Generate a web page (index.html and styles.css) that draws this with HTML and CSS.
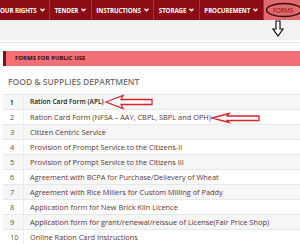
FILE: index.html
```html
<!DOCTYPE html>
<html lang="en">
<head>
<meta charset="UTF-8">
<meta name="viewport" content="width=device-width, initial-scale=1.0">
<title>Forms</title>
<link rel="stylesheet" href="styles.css">
</head>
<body>
<div class="menu">
  <a class="menu-item first">OUR RIGHTS <svg class="caret" viewBox="0 0 6 4"><path d="M0.6 0.6 L3 3 L5.4 0.6" /></svg></a>
  <a class="menu-item">TENDER <svg class="caret" viewBox="0 0 6 4"><path d="M0.6 0.6 L3 3 L5.4 0.6" /></svg></a>
  <a class="menu-item">INSTRUCTIONS <svg class="caret" viewBox="0 0 6 4"><path d="M0.6 0.6 L3 3 L5.4 0.6" /></svg></a>
  <a class="menu-item">STORAGE <svg class="caret" viewBox="0 0 6 4"><path d="M0.6 0.6 L3 3 L5.4 0.6" /></svg></a>
  <a class="menu-item">PROCUREMENT <svg class="caret" viewBox="0 0 6 4"><path d="M0.6 0.6 L3 3 L5.4 0.6" /></svg></a>
  <a class="menu-item active">FORMS
    <svg class="ring" viewBox="0 0 38 16"><ellipse cx="19" cy="8" rx="17.5" ry="6.5" /></svg>
    <svg class="down-arrow" viewBox="0 0 12 17"><path d="M4 1 L8 1 L8 9 L11 9 L6 16 L1 9 L4 9 Z" /></svg>
  </a>
</div>
<div class="subbar"></div>

<div class="content">
  <div class="banner">FORMS FOR PUBLIC USE</div>
  <h2 class="dept">FOOD &amp; SUPPLIES DEPARTMENT</h2>
  <table class="forms-table">
    <tr class="bold"><td class="num">1</td><td>Ration Card Form (APL)<svg class="mark-arrow big" viewBox="0 0 50 16"><path d="M2 8 L19 1.5 L17 5.5 L48 5.5 L48 10.5 L17 10.5 L19 14.5 Z" /></svg></td></tr>
    <tr><td class="num">2</td><td>Ration Card Form (NFSA &ndash; AAY, CBPL, SBPL and OPH)<svg class="mark-arrow small" viewBox="0 0 50 12"><path d="M1 6 L18 1.5 L16 4 L48 4 L48 8.5 L16 8.5 L18 10.5 Z" /></svg></td></tr>
    <tr><td class="num">3</td><td>Citizen Centric Service</td></tr>
    <tr><td class="num">4</td><td>Provision of Prompt Service to the Citizens-II</td></tr>
    <tr><td class="num">5</td><td>Provision of Prompt Service to the Citizens III</td></tr>
    <tr><td class="num">6</td><td>Agreement with BCPA for Purchase/Delievery of Wheat</td></tr>
    <tr><td class="num">7</td><td>Agreement with Rice Millers for Custom Milling of Paddy</td></tr>
    <tr><td class="num">8</td><td>Application form for New Brick Kiln Licence</td></tr>
    <tr><td class="num">9</td><td>Application form for grant/renewal/reissue of License(Fair Price Shop)</td></tr>
    <tr><td class="num">10</td><td>Online Ration Card Instructions</td></tr>
  </table>
</div>
</body>
</html>
```

FILE: styles.css
```css
body {
    margin: 0;
    font-family: 'Open Sans', 'DejaVu Sans', sans-serif;
    background-color: #fff;
    overflow: hidden;
}

.menu {
    display: flex;
    height: 20px;
    background-color: #8c0c15;
    white-space: nowrap;
}

.menu-item {
    display: flex;
    align-items: center;
    gap: 3px;
    padding: 0 4.5px;
    color: #fff;
    font-size: 6.2px;
    font-weight: 700;
    letter-spacing: -0.1px;
    border-right: 1px solid #a8333a;
    text-decoration: none;
}

.menu-item.first {
    padding-left: 0;
}

.caret {
    width: 5px;
    height: 4px;
    fill: none;
    stroke: #fff;
    stroke-width: 1.6;
}

.menu-item.active {
    position: relative;
    flex: 1;
    padding-left: 9px;
    background-color: #e06a70;
    color: #8c0c15;
    font-weight: 400;
    border-right: none;
}

.ring {
    position: absolute;
    left: 1px;
    top: 2px;
    width: 38px;
    height: 16px;
    fill: none;
    stroke: #3c0a0c;
    stroke-width: 1.3;
}

.down-arrow {
    position: absolute;
    left: 8px;
    top: 20px;
    width: 12px;
    height: 17px;
    fill: #fff;
    stroke: #111;
    stroke-width: 1.2;
    z-index: 2;
}

.subbar {
    height: 20px;
    background-color: #f2f2f2;
}

.content {
    padding: 8px 0 0 3px;
    border-top: 1px solid #e6e6e6;
    margin-top: 2px;
}

.banner {
    height: 15px;
    line-height: 15px;
    padding-left: 9px;
    background-color: #f07075;
    border-left: 3px solid #8c0c15;
    color: #3a0a0c;
    font-size: 6px;
    font-weight: 700;
}

.dept {
    margin: 10px 0 7px 5px;
    font-size: 8.5px;
    font-weight: 600;
    color: #707070;
}

.forms-table {
    width: 100%;
    border-collapse: collapse;
    font-size: 7.4px;
    color: #5c3536;
}

.forms-table td {
    height: 14px;
    padding: 0 0 0 6px;
    border-top: 1px solid #e8e8e8;
    white-space: nowrap;
}

.forms-table tr:nth-child(odd) {
    background-color: #f6f6f6;
}

.forms-table td.num {
    width: 13px;
    padding-left: 7px;
    color: #555;
    border-right: 1px solid #ececec;
}

.forms-table tr.bold td {
    font-weight: 600;
    font-size: 6.6px;
    color: #222;
}

.mark-arrow {
    vertical-align: middle;
    fill: #fff;
    stroke: #d8262e;
    stroke-width: 1.3;
}

.mark-arrow.big {
    width: 50px;
    height: 16px;
    margin: -4px 0 -3px 0;
}

.mark-arrow.small {
    width: 50px;
    height: 12px;
    margin: -3px 0 -2px 0;
}
```
